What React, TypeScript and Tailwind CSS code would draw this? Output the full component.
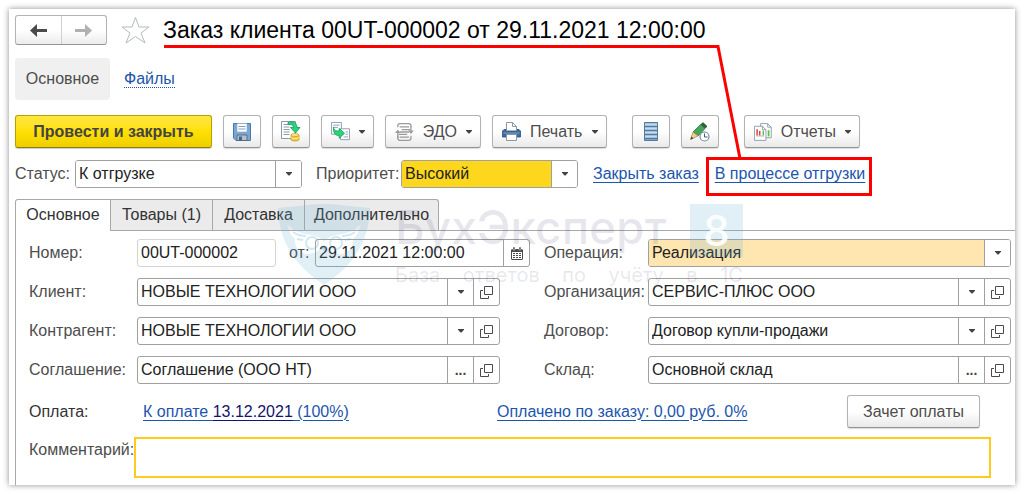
import type { ReactNode } from "react";

const toolButton =
  "flex h-[33px] items-center rounded-[3px] border border-[#b3b3b3] border-b-[#949494] bg-linear-to-b from-white from-50% to-[#e9e9e9] text-[#4d4d4d] shadow-[0_1px_1px_rgba(0,0,0,0.15)]";
const link = "text-[#1c55ae] underline decoration-1 underline-offset-3";
const box = "rounded-[3px] border border-[#a0a0a0] bg-white";
const tab = "border-t border-r border-[#a8a8a8] bg-[#ebebeb]";

function Caret() {
  return (
    <svg width="6" height="4" viewBox="0 0 6 4" className="shrink-0">
      <path d="M0 0h6v.8L3.500 3.500h-1L0 .8z" fill="#444" />
    </svg>
  );
}

function OpenIcon() {
  return (
    <svg width="13" height="13" viewBox="0 0 13 13" fill="none" stroke="#4a4a4a">
      <path d="M4.500.5h8v8h-8z" />
      <path d="M3 4.500H.5v8h8V10" />
    </svg>
  );
}

function CalendarIcon() {
  return (
    <svg width="12" height="13" viewBox="0 0 12 13">
      <path d="M1 2h10l1 1v9l-1 1H1l-1-1V3z" fill="#4a4a4a" />
      <path d="M2 0h2v3H2zM8 0h2v3H8z" fill="#4a4a4a" stroke="#fff" strokeWidth=".5" />
      <path d="M1 5h10v7H1z" fill="#fff" />
      <path d="M2 6h2v1H2zM5 6h2v1H5zM8 6h2v1H8zM2 8h2v1H2zM5 8h2v1H5zM8 8h2v1H8zM2 10h2v1H2zM5 10h2v1H5zM8 10h2v1H8z" fill="#4a4a4a" />
    </svg>
  );
}

function SaveIcon() {
  return (
    <svg width="18" height="18" viewBox="0 0 18 18">
      <path d="M.5.5h17v17H3L.5 15z" fill="#7aa7d6" stroke="#4a78a8" />
      <path d="M4 .5h10V9H4z" fill="#fff" stroke="#8aa9c8" strokeWidth=".6" />
      <path d="M5.500 3.500h7M5.500 6h7" stroke="#7fa3c8" />
      <path d="M4 12h10v5.500H4z" fill="#b9bec3" stroke="#48617c" strokeWidth=".8" />
      <path d="M6 13.500h3v4H6z" fill="#41668f" />
    </svg>
  );
}

function PostIcon() {
  return (
    <svg width="20" height="21" viewBox="0 0 20 21">
      <path d="M.5.5h14v17H.5z" fill="#fff" stroke="#8997a6" />
      <path d="M2.500 3.500h6M2.500 6h6M2.500 8.500h6M2.500 11h6M2.500 13.500h6" stroke="#8a9cae" />
      <path d="M10 14h8v4.500c0 2-8 2-8 0z" fill="#f3c63c" stroke="#c79a20" strokeWidth=".8" />
      <ellipse cx="14" cy="14" rx="4" ry="1.500" fill="#ffe68a" stroke="#c79a20" strokeWidth=".7" />
      <path d="M10 16.500c1 1.500 7 1.500 8 0" fill="none" stroke="#fff0a8" />
      <path d="M7 1.500c5-1.500 9 0 9 5h3L14.500 12 9.500 6.500h3C12.500 4 10.500 3 7 3.500z" fill="#27d67b" stroke="#14965a" strokeWidth=".8" />
    </svg>
  );
}

function BasedOnIcon() {
  return (
    <svg width="21" height="21" viewBox="0 0 21 21">
      <path d="M.5.5h11v13H.5z" fill="#fff" stroke="#8997a6" />
      <path d="M2.500 3.500h7M2.500 6h5" stroke="#8a9cae" />
      <path d="M10.500 7.500h10v12h-10z" fill="#fff" stroke="#8997a6" />
      <path d="M16 11h3M16 13.500h3M14 16.500h5" stroke="#8a9cae" />
      <path d="M3 5.500c0 3 1.500 4.500 6 4.500V7l6 5.500L9 18v-3c-5 0-7-4-6-9.500z" fill="#27d67b" stroke="#14965a" strokeWidth=".8" />
    </svg>
  );
}

function EdoIcon() {
  return (
    <svg width="20" height="20" viewBox="0 0 20 20" fill="none" stroke="#9a9a9a" strokeWidth="1.400">
      <path d="M3 5V2.500L4.500 1h11L17 2.500V5M17 14v3.500L15.500 19h-11L3 17.500V14" />
      <path d="M5 4.500h10M7 7.500h9M5 10h10M4 12.500h9M5 15.500h10" />
      <path d="M3 16v-5M17 4v5" />
      <path d="M0 11l3-3.500L6 11zM14 8.500l3 3.500 3-3.500z" fill="#9a9a9a" stroke="none" />
    </svg>
  );
}

function PrintIcon() {
  return (
    <svg width="19" height="19" viewBox="0 0 19 19">
      <path d="M4.500 8V.5h6l4 4V8" fill="#fff" stroke="#8997a6" />
      <path d="M10.500.5v4h4" fill="none" stroke="#8997a6" />
      <path d="M2 7.500h2v1.500h11V7.500h2L18.500 9v6h-18V9z" fill="#3d6c9c" stroke="#29517b" strokeWidth=".8" />
      <path d="M1.500 11h16" stroke="#7ca3ca" />
      <path d="M4.500 12.500h10v6h-10z" fill="#fff" stroke="#8997a6" />
    </svg>
  );
}

function ListIcon() {
  return (
    <svg width="14" height="19" viewBox="0 0 14 19">
      <path d="M.5.5h13v18H.5z" fill="#7fa6c8" stroke="#53799b" />
      <path d="M1 2.500h12M1 6.500h12M1 10.500h12M1 14.500h12" stroke="#c3dcf0" strokeWidth="2" />
      <path d="M1 4.500h12M1 8.500h12M1 12.500h12M1 16.500h12" stroke="#53799b" strokeWidth="1" />
    </svg>
  );
}

function PencilIcon() {
  return (
    <svg width="20" height="20" viewBox="0 0 20 20">
      <path d="M3 10L10.500 2.500l4.500 4L8 14z" fill="#4aa65a" stroke="#2a7b3b" strokeWidth=".8" />
      <path d="M10.500 2.500L12.500.5h1L17 4v1l-2 1.500z" fill="#2c6539" />
      <path d="M3 10L.5 17.500 8 14z" fill="#f0cf96" stroke="#b08346" strokeWidth=".7" />
      <path d="M.5 17.500l1-3 2 2z" fill="#444" />
      <circle cx="14.500" cy="14.500" r="4.500" fill="#fff" stroke="#758ca5" strokeWidth="1.200" />
      <path d="M14.500 11.500v3.500h3" fill="none" stroke="#445b74" />
    </svg>
  );
}

function ReportsIcon() {
  return (
    <svg width="20" height="20" viewBox="0 0 20 20">
      <path d="M7.500.5h8l4 4v12h-12z" fill="#fff" stroke="#8997a6" />
      <path d="M15.500.5v4h4" fill="none" stroke="#8997a6" />
      <path d="M16.500 8v7" stroke="#55c244" strokeWidth="2" />
      <path d="M.5 3.500h9l4 4v12H.5z" fill="#fff" stroke="#8997a6" />
      <path d="M9.500 3.500v4h4" fill="none" stroke="#8997a6" />
      <path d="M3.500 7v7" stroke="#e2382c" strokeWidth="1.600" />
      <path d="M6.500 9v5" stroke="#e2382c" strokeWidth="1.600" />
      <path d="M10.500 8.500V14" stroke="#55c244" strokeWidth="1.600" />
      <path d="M2.500 14.500h9" stroke="#a3adb8" />
    </svg>
  );
}

function Select({ id, value, className, fill }: { id: string; value: string; className: string; fill: string }) {
  return (
    <div className={`grid h-[28px] grid-cols-[1fr_26px] overflow-hidden ${box} ${className}`}>
      <select id={id} className={`col-span-2 col-start-1 row-start-1 w-full appearance-none pl-[3px] text-[#222] outline-none ${fill}`}>
        <option>{value}</option>
      </select>
      <span className="pointer-events-none col-start-2 row-start-1 flex items-center justify-center border-l border-[#a0a0a0] bg-white">
        <Caret />
      </span>
    </div>
  );
}

function Lookup({ id, label, value, dots, labelWidth, className = "" }: { id: string; label: string; value: string; dots?: boolean; labelWidth: string; className?: string }) {
  return (
    <div className={`flex h-[28px] items-center ${className}`}>
      <label htmlFor={id} className={`shrink-0 ${labelWidth}`}>{label}</label>
      <div className={`flex h-full min-w-0 flex-1 overflow-hidden ${box}`}>
        <input id={id} defaultValue={value} className="min-w-0 flex-1 pl-[3px] text-[#222] outline-none" />
        <button aria-label="Выбрать" className="flex w-[26px] items-center justify-center border-l border-[#a0a0a0]">
          {dots ? <span className="text-[14px] font-bold text-[#444]">...</span> : <Caret />}
        </button>
        <button aria-label="Открыть" className="flex w-[26px] items-center justify-center border-l border-[#a0a0a0]">
          <OpenIcon />
        </button>
      </div>
    </div>
  );
}

function MenuButton({ icon, label, children, className }: { icon: ReactNode; label?: string; children?: ReactNode; className: string }) {
  return (
    <button aria-label={label} className={`${toolButton} gap-[9px] pr-[8px] pl-[9px] ${className}`}>
      {icon}
      {children}
      <span className="ml-auto"><Caret /></span>
    </button>
  );
}

function Watermark() {
  return (
    <div className="pointer-events-none absolute top-[195px] left-[269px] flex" aria-hidden="true">
      <svg width="92" height="82" viewBox="0 0 92 82" fill="#69afd7" fillOpacity=".2">
        <path
          fillRule="evenodd"
          d="M0 4C16 3 31 0 46 0s30 3 46 4c-1 30-13 55-46 77C13 59 1 34 0 4zM10 21c7 7 15 9 23 10 6 1 10 3 13 7 3-4 7-6 13-7 8-1 16-3 23-10-1 7-3 11-7 14 1 8-4 14-12 15-8 0-13-4-17-10-4 6-9 10-17 10-8-1-13-7-12-15-4-3-6-7-7-14z"
        />
        <g fill="none" stroke="#69afd7" strokeOpacity=".3" strokeWidth="2">
          <circle cx="34" cy="39" r="6" />
          <circle cx="58" cy="39" r="6" />
          <path d="M15 28c4 3 8 4 13 4M77 28c-4 3-8 4-13 4M19 35l6 1M73 35l-6 1" />
        </g>
        <path d="M43 43l3 4 3-4z" fillOpacity=".4" />
      </svg>
      <div className="ml-[25px] flex w-[348px] flex-col font-[Inter,sans-serif] text-[#3c3c6e]/12">
        <div className="flex h-[53px] items-start justify-between">
          <span className="text-[46px] leading-[46px] font-medium">БухЭксперт</span>
          <span className="flex size-[53px] items-center justify-center bg-[#69afd7]/20 text-[42px] leading-none font-medium text-white/90">8</span>
        </div>
        <div className="mt-[6px] flex justify-between text-[20px] leading-[24px]">
          <span>База</span>
          <span>ответов</span>
          <span>по</span>
          <span>учёту</span>
          <span>в</span>
          <span>1С</span>
        </div>
      </div>
    </div>
  );
}

export default function App() {
  return (
    <div className="bg-white p-[9px] font-['Liberation_Sans',Arial,sans-serif] text-[16px] leading-[20px] text-[#4d4d4d]">
      <main className="relative bg-white pt-[6px] shadow-[0_0_6px_rgba(0,0,0,0.45)]">
        <div className="pl-[6px]">
          <header className="flex h-[30px] items-center">
            <div className="flex h-full w-[92px] rounded-[3px] border border-[#b3b3b3] border-b-[#949494] bg-linear-to-b from-white from-50% to-[#ececec]">
              <button aria-label="Назад" className="flex flex-1 items-center justify-center border-r border-[#cfcfcf]">
                <svg width="17" height="13" viewBox="0 0 17 13" fill="#4a4a4a">
                  <path d="M0 6.500L7 0v5h10v3H7v5z" />
                </svg>
              </button>
              <button aria-label="Вперед" className="flex flex-1 items-center justify-center">
                <svg width="17" height="13" viewBox="0 0 17 13" fill="#b0b0b0">
                  <path d="M17 6.500L10 0v5H0v3h10v5z" />
                </svg>
              </button>
            </div>
            <button aria-label="В избранное" className="ml-[14px]">
              <svg width="29" height="28" viewBox="0 0 29 28" fill="#fff" stroke="#b4bac0">
                <path d="M14.500 1.500l3.500 9.500h10l-8 6 4 10-9.500-6.500L5 27l4-10-8-6h10z" />
              </svg>
            </button>
            <h1 className="ml-[13px] text-[23px] leading-[30px] whitespace-nowrap text-black">Заказ клиента 00UT-000002 от 29.11.2021 12:00:00</h1>
          </header>

          <nav className="mt-[13px] flex h-[42px] items-center">
            <button className="h-full w-[95px] rounded-[4px] bg-[#f0f0f0]">Основное</button>
            <a href="#files" className="ml-[14px] border-b border-dotted border-[#1c55ae] leading-[17px] text-[#1c55ae]">Файлы</a>
          </nav>

          <div className="mt-[15px] flex gap-[11px]">
            <button className="h-[33px] w-[197px] rounded-[3px] border border-[#b9a000] border-b-[#8f7c00] bg-linear-to-b from-[#ffe83c] via-[#ffe000] to-[#edcf00] font-bold text-[#444] shadow-[0_1px_1px_rgba(0,0,0,0.2)]">
              Провести и закрыть
            </button>
            <button aria-label="Записать" className={`${toolButton} w-[38px] justify-center`}><SaveIcon /></button>
            <button aria-label="Провести" className={`${toolButton} w-[38px] justify-center`}><PostIcon /></button>
            <MenuButton icon={<BasedOnIcon />} label="Создать на основании" className="w-[53px]" />
            <MenuButton icon={<EdoIcon />} className="w-[96px]">ЭДО</MenuButton>
            <MenuButton icon={<PrintIcon />} className="w-[115px]">Печать</MenuButton>
            <button aria-label="Список" className={`${toolButton} ml-[14px] w-[38px] justify-center`}><ListIcon /></button>
            <button aria-label="История" className={`${toolButton} w-[38px] justify-center`}><PencilIcon /></button>
            <MenuButton icon={<ReportsIcon />} className="ml-[14px] w-[116px]">Отчеты</MenuButton>
          </div>

          <div className="mt-[12px] flex items-center whitespace-nowrap">
            <label htmlFor="status" className="w-[60px]">Статус:</label>
            <Select id="status" value="К отгрузке" className="w-[227px]" fill="bg-white" />
            <label htmlFor="priority" className="ml-[14px] w-[85px]">Приоритет:</label>
            <Select id="priority" value="Высокий" className="w-[177px]" fill="bg-[#fcd71e]" />
            <a href="#close" className={`ml-[15px] ${link}`}>Закрыть заказ</a>
            <a href="#state" className={`ml-[16px] ${link}`}>В процессе отгрузки</a>
          </div>

          <div className="mt-[11px] flex h-[32px] border-b border-[#a8a8a8] text-[#333]" role="tablist">
            <button role="tab" aria-selected="true" className="-mb-px w-[96px] rounded-tl-[3px] border border-b-0 border-[#a8a8a8] bg-white pb-px">Основное</button>
            <button role="tab" className={`w-[102px] ${tab}`}>Товары (1)</button>
            <button role="tab" className={`w-[92px] ${tab}`}>Доставка</button>
            <button role="tab" className={`w-[134px] rounded-tr-[3px] ${tab}`}>Дополнительно</button>
          </div>

          <div className="border-l border-[#a8a8a8] pt-[8px] pb-[7px] pl-[13px]">
            <div className="grid grid-cols-[minmax(0,501fr)_minmax(0,467fr)] gap-x-[14px] gap-y-[11px] pr-[4px]">
              <div className="flex h-[28px] items-center">
                <label htmlFor="number" className="w-[108px] shrink-0">Номер:</label>
                <input id="number" defaultValue="00UT-000002" className="h-full w-[139px] rounded-[3px] border border-[#d4d4d4] pl-[3px] text-[#222] outline-none" />
                <label htmlFor="date" className="ml-[13px] w-[26px] shrink-0">от:</label>
                <div className={`flex h-full min-w-0 flex-1 overflow-hidden ${box}`}>
                  <input id="date" defaultValue="29.11.2021 12:00:00" className="min-w-0 flex-1 pl-[3px] text-[#222] outline-none" />
                  <button aria-label="Календарь" className="flex w-[26px] items-center justify-center border-l border-[#a0a0a0]"><CalendarIcon /></button>
                </div>
              </div>
              <div className="flex h-[28px] items-center">
                <label htmlFor="operation" className="w-[104px] shrink-0">Операция:</label>
                <Select id="operation" value="Реализация" className="flex-1" fill="bg-[#ffe6b0]" />
              </div>
              <Lookup id="client" label="Клиент:" value="НОВЫЕ ТЕХНОЛОГИИ ООО" labelWidth="w-[108px]" className="mr-[30px]" />
              <Lookup id="company" label="Организация:" value="СЕРВИС-ПЛЮС ООО" labelWidth="w-[104px]" />
              <Lookup id="partner" label="Контрагент:" value="НОВЫЕ ТЕХНОЛОГИИ ООО" labelWidth="w-[108px]" className="mr-[30px]" />
              <Lookup id="contract" label="Договор:" value="Договор купли-продажи" labelWidth="w-[104px]" />
              <Lookup id="agreement" label="Соглашение:" value="Соглашение (ООО НТ)" dots labelWidth="w-[108px]" className="mr-[30px]" />
              <Lookup id="store" label="Склад:" value="Основной склад" dots labelWidth="w-[104px]" />
            </div>

            <div className="mt-[11px] flex items-center pr-[35px]">
              <span className="w-[114px] text-[#333]">Оплата:</span>
              <a href="#payment" className={`w-[354px] ${link}`}>
                К оплате <span className="text-[#14146e] underline decoration-1 underline-offset-3">13.12.2021</span> (100%)
              </a>
              <a href="#paid" className={link}>Оплачено по заказу: 0,00 руб. 0%</a>
              <button className={`${toolButton} ml-auto w-[133px] justify-center`}>Зачет оплаты</button>
            </div>

            <div className="mt-[9px] flex pr-[24px]">
              <label htmlFor="comment" className="w-[105px] shrink-0 pt-[3px]">Комментарий:</label>
              <textarea id="comment" className="h-[41px] flex-1 resize-none border-2 border-[#fccb1e] bg-white px-[4px] outline-none" />
            </div>
          </div>
        </div>

        <Watermark />
        <svg className="pointer-events-none absolute top-0 left-0" width="870" height="190" fill="none" stroke="#f00" strokeWidth="3">
          <path d="M155 37.500h554l22 112" />
          <path d="M698.500 149.500h163v36h-163z" />
        </svg>
      </main>
    </div>
  );
}
